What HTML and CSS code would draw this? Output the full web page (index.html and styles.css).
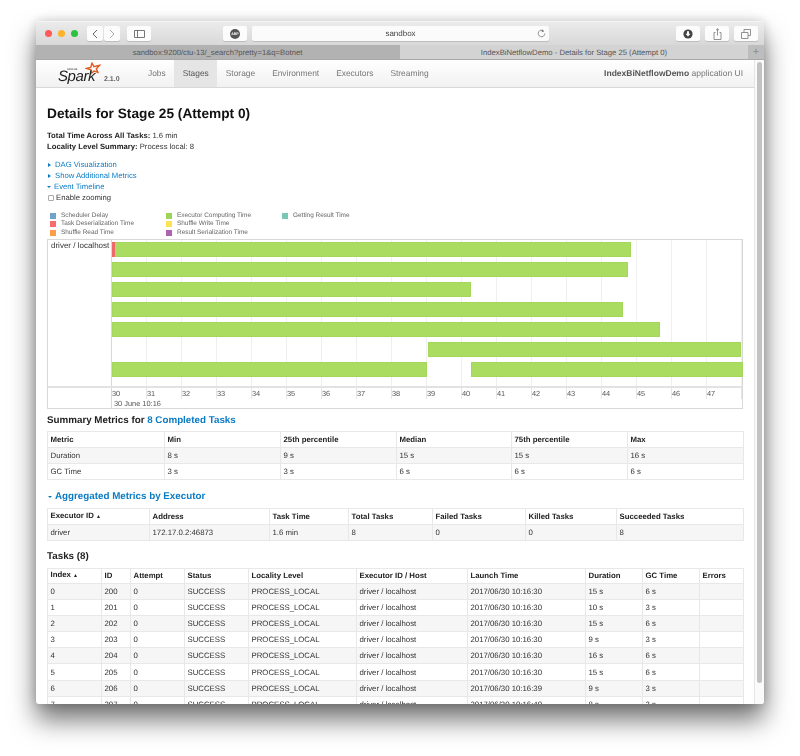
FILE: index.html
```html
<!DOCTYPE html>
<html lang="en-US">
  <head>
    <meta charset="utf-8"/>
    <title>Details for Stage 25 (Attempt 0)</title>
    <link rel="stylesheet" href="styles.css">
  </head>

  <body>
    <div class="window">
      <!-- browser chrome -->
      <div class="toolbar">
        <span class="light red"></span>
        <span class="light yellow"></span>
        <span class="light green"></span>
        <div class="btn-pair">
          <span class="btn back"><svg width="6" height="10" viewBox="0 0 6 10"><path d="M5 1 1 5l4 4" fill="none" stroke="#666" stroke-width="1"/></svg></span>
          <span class="btn forward"><svg width="6" height="10" viewBox="0 0 6 10"><path d="M1 1l4 4-4 4" fill="none" stroke="#aaa" stroke-width="1"/></svg></span>
        </div>
        <span class="btn sidebar"><svg width="11" height="8" viewBox="0 0 11 8"><path d="M.5.5h10v7H.5zM3.5.5v7" fill="none" stroke="#777" stroke-width="1"/></svg></span>
        <span class="btn abp"><span class="abp-sign">ABP</span></span>
        <div class="urlbar">
          <span class="url">sandbox</span>
          <svg class="reload" width="9" height="9" viewBox="0 0 9 9"><path d="M6.9 2.2A3.3 3.3 0 1 0 7.8 4.5" fill="none" stroke="#777" stroke-width=".8"/><path d="M4.8.4 7 2.2 4.8 3.2z" fill="#777"/></svg>
        </div>
        <span class="btn download"><svg width="10" height="10" viewBox="0 0 10 10"><circle cx="5" cy="5" r="4.6" fill="#444"/><path d="M4 2.2h2v2.6h1.5L5 7.6 2.5 4.8H4z" fill="#fff"/></svg></span>
        <span class="btn share"><svg width="9" height="12" viewBox="0 0 9 12"><path d="M2.5 4.5H1v7h7v-7H6.5M4.5 7.5V.8M3 2.2 4.5.8 6 2.2" fill="none" stroke="#777" stroke-width=".8"/></svg></span>
        <span class="btn tabs-btn"><svg width="10" height="10" viewBox="0 0 10 10"><path d="M3 3V.5h6.5v6H7M.5 3.5H7v6H.5z" fill="none" stroke="#777" stroke-width=".8"/></svg></span>
      </div>
      <div class="tabbar">
        <div class="tab tab-off">sandbox:9200/ctu-13/_search?pretty=1&amp;q=Botnet</div>
        <div class="tab tab-on">IndexBiNetflowDemo - Details for Stage 25 (Attempt 0)</div>
        <div class="tab-plus">+</div>
      </div>

      <div class="viewport">
        <div class="page">
          <!-- spark nav -->
          <div class="navbar">
            <div class="brand">
              <svg class="star" width="16" height="14" viewBox="0 0 16 14"><path d="M7 1.2 9 4.6l5.6-1.3-3.3 3.5 1.6 3.6-3.9-1.3-3.2 2.6.4-3.8L1.4 6.4l4.3-.9z" fill="none" stroke="#e25a1c" stroke-width="1.4"/></svg>
              <span class="apache">APACHE</span>
              <span class="spark-word">Spark</span>
              <span class="version">2.1.0</span>
            </div>
            <ul class="nav-links">
              <li>Jobs</li>
              <li class="active">Stages</li>
              <li>Storage</li>
              <li>Environment</li>
              <li>Executors</li>
              <li>Streaming</li>
            </ul>
            <p class="app-name"><strong>IndexBiNetflowDemo</strong> application UI</p>
          </div>

          <div class="content">
            <h3 class="title">Details for Stage 25 (Attempt 0)</h3>
            <ul class="summary-list">
              <li><strong>Total Time Across All Tasks:</strong> 1.6 min</li>
              <li><strong>Locality Level Summary:</strong> Process local: 8</li>
            </ul>

            <div class="toggles">
              <div class="toggle"><span class="arrow-right"></span><a href="#">DAG Visualization</a></div>
              <div class="toggle"><span class="arrow-right"></span><a href="#">Show Additional Metrics</a></div>
              <div class="toggle"><span class="arrow-down"></span><a href="#">Event Timeline</a></div>
              <label class="zoom-check"><input type="checkbox"> Enable zooming</label>
            </div>

            <div class="legend">
              <div class="legend-item"><span class="swatch c-delay"></span>Scheduler Delay</div>
              <div class="legend-item"><span class="swatch c-run"></span>Executor Computing Time</div>
              <div class="legend-item"><span class="swatch c-result"></span>Getting Result Time</div>
              <div class="legend-item"><span class="swatch c-deser"></span>Task Deserialization Time</div>
              <div class="legend-item"><span class="swatch c-write"></span>Shuffle Write Time</div>
              <div class="legend-item"></div>
              <div class="legend-item"><span class="swatch c-read"></span>Shuffle Read Time</div>
              <div class="legend-item"><span class="swatch c-ser"></span>Result Serialization Time</div>
            </div>

            <div class="timeline">
              <div class="timeline-top">
                <div class="group-label">driver / localhost</div>
                <div class="canvas">
                  <div class="bar" style="top:2px;left:0;width:519px"><span class="bar-deser"></span></div>
                  <div class="bar" style="top:22px;left:0;width:516px"></div>
                  <div class="bar" style="top:42px;left:0;width:359px"></div>
                  <div class="bar" style="top:62px;left:0;width:511px"></div>
                  <div class="bar" style="top:82px;left:0;width:548px"></div>
                  <div class="bar" style="top:102px;left:316px;width:313px"></div>
                  <div class="bar" style="top:122px;left:0;width:315px"></div>
                  <div class="bar" style="top:122px;left:359px;width:272px"></div>
                </div>
              </div>
              <div class="timeline-axis">
                <div class="axis-spacer"></div>
                <div class="axis-main">
                  <div class="ticks">
                    <span>30</span><span>31</span><span>32</span><span>33</span><span>34</span><span>35</span>
                    <span>36</span><span>37</span><span>38</span><span>39</span><span>40</span><span>41</span>
                    <span>42</span><span>43</span><span>44</span><span>45</span><span>46</span><span>47</span>
                  </div>
                  <div class="axis-date">30 June 10:16</div>
                </div>
              </div>
            </div>

            <h4 class="section">Summary Metrics for <a href="#">8 Completed Tasks</a></h4>
            <table class="grid t-summary">
              <colgroup><col><col><col><col><col><col></colgroup>
              <tr><th>Metric</th><th>Min</th><th>25th percentile</th><th>Median</th><th>75th percentile</th><th>Max</th></tr>
              <tr><td>Duration</td><td>8 s</td><td>9 s</td><td>15 s</td><td>15 s</td><td>16 s</td></tr>
              <tr><td>GC Time</td><td>3 s</td><td>3 s</td><td>6 s</td><td>6 s</td><td>6 s</td></tr>
            </table>

            <h4 class="section section-agg"><span class="arrow-down"></span><a href="#">Aggregated Metrics by Executor</a></h4>
            <table class="grid t-exec">
              <colgroup><col><col><col><col><col><col><col></colgroup>
              <tr><th>Executor ID <span class="sort">▲</span></th><th>Address</th><th>Task Time</th><th>Total Tasks</th><th>Failed Tasks</th><th>Killed Tasks</th><th>Succeeded Tasks</th></tr>
              <tr><td>driver</td><td>172.17.0.2:46873</td><td>1.6 min</td><td>8</td><td>0</td><td>0</td><td>8</td></tr>
            </table>

            <h4 class="section section-tasks">Tasks (8)</h4>
            <table class="grid t-tasks">
              <colgroup><col><col><col><col><col><col><col><col><col><col></colgroup>
              <tr><th>Index <span class="sort">▲</span></th><th>ID</th><th>Attempt</th><th>Status</th><th>Locality Level</th><th>Executor ID / Host</th><th>Launch Time</th><th>Duration</th><th>GC Time</th><th>Errors</th></tr>
              <tr><td>0</td><td>200</td><td>0</td><td>SUCCESS</td><td>PROCESS_LOCAL</td><td>driver / localhost</td><td>2017/06/30 10:16:30</td><td>15 s</td><td>6 s</td><td></td></tr>
              <tr><td>1</td><td>201</td><td>0</td><td>SUCCESS</td><td>PROCESS_LOCAL</td><td>driver / localhost</td><td>2017/06/30 10:16:30</td><td>10 s</td><td>3 s</td><td></td></tr>
              <tr><td>2</td><td>202</td><td>0</td><td>SUCCESS</td><td>PROCESS_LOCAL</td><td>driver / localhost</td><td>2017/06/30 10:16:30</td><td>15 s</td><td>6 s</td><td></td></tr>
              <tr><td>3</td><td>203</td><td>0</td><td>SUCCESS</td><td>PROCESS_LOCAL</td><td>driver / localhost</td><td>2017/06/30 10:16:30</td><td>9 s</td><td>3 s</td><td></td></tr>
              <tr><td>4</td><td>204</td><td>0</td><td>SUCCESS</td><td>PROCESS_LOCAL</td><td>driver / localhost</td><td>2017/06/30 10:16:30</td><td>16 s</td><td>6 s</td><td></td></tr>
              <tr><td>5</td><td>205</td><td>0</td><td>SUCCESS</td><td>PROCESS_LOCAL</td><td>driver / localhost</td><td>2017/06/30 10:16:30</td><td>15 s</td><td>6 s</td><td></td></tr>
              <tr><td>6</td><td>206</td><td>0</td><td>SUCCESS</td><td>PROCESS_LOCAL</td><td>driver / localhost</td><td>2017/06/30 10:16:39</td><td>9 s</td><td>3 s</td><td></td></tr>
              <tr><td>7</td><td>207</td><td>0</td><td>SUCCESS</td><td>PROCESS_LOCAL</td><td>driver / localhost</td><td>2017/06/30 10:16:40</td><td>8 s</td><td>3 s</td><td></td></tr>
            </table>
          </div>
        </div>
        <div class="scrollbar"><div class="thumb"></div></div>
      </div>
    </div>
  </body>
</html>
```

FILE: styles.css
```css
* {
  box-sizing: border-box;
}

html, body {
  height: 100%;
}

body {
  background-color: #fff;
  color: #333;
  font: 7.7px/11px "Liberation Sans", Arial, sans-serif;
  text-rendering: geometricPrecision;
  margin: 0;
  padding: 21px 36px 0;
  overflow: hidden;
}

a {
  color: #0b7cc4;
  text-decoration: none;
}

/* browser window */
.window {
  height: 683px;
  border-radius: 4px 4px 3px 3px;
  overflow: hidden;
  background: #fff;
  box-shadow: 0 16px 26px rgba(0, 0, 0, .55), 0 0 12px rgba(0, 0, 0, .18);
  filter: blur(.4px);
}

.toolbar {
  height: 24px;
  display: flex;
  align-items: center;
  padding: 0 6px 0 9px;
  background: linear-gradient(#ebebeb, #d8d8d8);
  border-top: 1px solid #f4f4f4;
}

.light {
  width: 7px;
  height: 7px;
  border-radius: 50%;
  margin-right: 6px;
}
.red { background: #fc5b57; }
.yellow { background: #fdb428; }
.green { background: #2cc13f; }

.btn {
  height: 15px;
  display: flex;
  align-items: center;
  justify-content: center;
  background: #fcfcfc;
  border-radius: 2px;
  box-shadow: 0 1px 0 #bdbdbd;
}

.btn-pair {
  display: flex;
  gap: 1px;
  margin-left: 3px;
}
.back, .forward { width: 16px; }
.sidebar { width: 24px; margin-left: 7px; }
.abp { width: 24px; margin-left: 72px; }

.abp-sign {
  width: 10px;
  height: 10px;
  border-radius: 50%;
  background: #555;
  color: #fff;
  font-size: 3.5px;
  font-weight: bold;
  line-height: 10px;
  text-align: center;
}

.urlbar {
  width: 297px;
  height: 15px;
  margin-left: 5px;
  display: flex;
  align-items: center;
  justify-content: center;
  position: relative;
  background: #fbfbfb;
  border-radius: 2px;
  box-shadow: 0 1px 0 #bdbdbd;
}
.url {
  font-size: 8px;
  color: #444;
}
.reload {
  position: absolute;
  right: 3px;
  top: 3px;
}

.download { width: 24px; margin-left: 127px; }
.share { width: 24px; margin-left: 5px; }
.tabs-btn { width: 24px; margin-left: 5px; }

.tabbar {
  height: 15px;
  display: flex;
  font-size: 7.7px;
  line-height: 15px;
  color: #555;
  text-align: center;
  border-bottom: 1px solid #a8a8a8;
}
.tab-off {
  width: 364px;
  background: #b2b2b2;
  padding-right: 1px;
}
.tab-on {
  width: 348px;
  background: #d3d3d3;
}
.tab-plus {
  flex: 1;
  background: #bdbdbd;
  color: #8b8b8b;
  font-size: 11px;
}

.viewport {
  display: flex;
  height: 644px;
  overflow: hidden;
}

.page {
  flex: 1;
  min-width: 0;
}

.scrollbar {
  width: 10px;
  background: #fafafa;
  border-left: 1px solid #e6e6e6;
  padding: 2px 2px 0 2px;
}
.thumb {
  height: 621px;
  border-radius: 3px;
  background: #c2c2c2;
}

/* spark nav */
.navbar {
  height: 28px;
  display: flex;
  align-items: stretch;
  padding-right: 11px;
  background: linear-gradient(#fff, #f1f1f1);
  border-bottom: 1px solid #d8d8d8;
}

.brand {
  width: 103.5px;
  position: relative;
}
.star {
  position: absolute;
  left: 49px;
  top: 2px;
}
.apache {
  position: absolute;
  left: 31px;
  top: 8px;
  font-size: 2.5px;
  line-height: 3px;
  font-weight: bold;
  color: #555;
}
.spark-word {
  position: absolute;
  left: 22px;
  top: 9px;
  font-size: 15px;
  line-height: 15px;
  font-style: italic;
  letter-spacing: -.4px;
  color: #222;
}
.version {
  position: absolute;
  left: 68px;
  top: 14px;
  font-size: 7px;
  font-weight: bold;
  color: #666;
}

.nav-links {
  list-style: none;
  display: flex;
  margin: 0;
  padding: 0;
  font-size: 8.4px;
  line-height: 27px;
  color: #777;
}
.nav-links li {
  padding: 0 8.5px;
}
.nav-links .active {
  background: #e5e5e5;
  color: #555;
}

.app-name {
  margin: 0 0 0 auto;
  font-size: 8.5px;
  line-height: 27px;
  color: #777;
}
.app-name strong {
  color: #555;
}

/* page body */
.content {
  padding: 0 11px;
}

.title {
  margin: 17px 0 0;
  font-size: 13.7px;
  line-height: 17px;
  font-weight: bold;
  color: #111;
}

.summary-list {
  list-style: none;
  margin: 8px 0 0;
  padding: 0;
  line-height: 11px;
}
.summary-list strong {
  color: #222;
}

.toggles {
  margin-top: 7px;
}
.toggle, .zoom-check {
  display: flex;
  align-items: center;
  height: 11px;
}
.zoom-check input {
  appearance: none;
  width: 6px;
  height: 6px;
  margin: 1px 2px 0 1px;
  border: 1px solid #aaa;
  border-radius: 1px;
  background: #fff;
}

.arrow-right {
  width: 0;
  height: 0;
  margin: 0 4px 0 1px;
  border-left: 3px solid #0b7cc4;
  border-top: 2px solid transparent;
  border-bottom: 2px solid transparent;
}
.arrow-down {
  width: 0;
  height: 0;
  margin-right: 3px;
  border-top: 2px solid #0b7cc4;
  border-left: 2.5px solid transparent;
  border-right: 2.5px solid transparent;
}

.legend {
  display: grid;
  grid-template-columns: 116px 116px 116px;
  margin: 8.5px 0 0 3px;
  font-size: 6.45px;
  line-height: 8.5px;
  color: #666;
}
.legend-item {
  display: flex;
  align-items: center;
  height: 8.5px;
}
.swatch {
  width: 6px;
  height: 6px;
  margin-right: 5px;
}
.c-delay { background: #6fa3cb; }
.c-deser { background: #f76c6c; }
.c-read { background: #fb9f4a; }
.c-run { background: #9fd45a; }
.c-write { background: #fde354; }
.c-ser { background: #ae63ae; }
.c-result { background: #78c8b6; }

/* timeline */
.timeline {
  height: 170px;
  margin-top: 1.5px;
  border: 1px solid #d8d8d8;
  display: flex;
  flex-direction: column;
}
.timeline-top {
  height: 148px;
  display: flex;
  border-bottom: 2px solid #e2e2e2;
}
.group-label {
  width: 64px;
  padding: 0 0 0 3px;
  font-size: 8px;
  line-height: 11px;
  border-right: 1px solid #d8d8d8;
}
.canvas {
  flex: 1;
  position: relative;
  background: repeating-linear-gradient(90deg, #fff 0, #fff 34px, #efefef 34px, #efefef 35px);
}
.bar {
  position: absolute;
  height: 15px;
  background: #abdc62;
  border: 1px solid #a4d65a;
}
.bar-deser {
  display: block;
  width: 3px;
  height: 15px;
  margin: -1px 0 0 -1px;
  background: #f0696a;
}
.timeline-axis {
  flex: 1;
  display: flex;
}
.axis-spacer {
  width: 64px;
}
.axis-main {
  flex: 1;
  border-left: 1px solid #d8d8d8;
}
.ticks {
  display: flex;
  height: 11px;
  font-size: 7.4px;
  line-height: 11px;
  color: #555;
}
.ticks span {
  flex: 0 0 35px;
  border-right: 1px solid #e6e6e6;
}
.axis-date {
  padding-left: 2px;
  font-size: 7.4px;
  line-height: 9px;
  color: #555;
}

/* tables */
.section {
  margin: 6px 0 4px;
  font-size: 9.8px;
  line-height: 12px;
  font-weight: bold;
  color: #222;
}
.section-agg {
  margin: 11px 0 5px;
  display: flex;
  align-items: center;
}
.section-agg .arrow-down {
  margin: 0 3px 0 1px;
}
.section-tasks {
  margin: 10px 0 5px;
}

.grid {
  width: 696px;
  table-layout: fixed;
  border-collapse: collapse;
  border: 1px solid #e8e8e8;
  font-size: 7.8px;
}
.grid th, .grid td {
  height: 16px;
  padding: 0 2.5px;
  border: 1px solid #e8e8e8;
  text-align: left;
  white-space: nowrap;
  overflow: hidden;
}
.t-tasks th {
  height: 15px;
}
.t-tasks td {
  height: 16.2px;
}
.grid th {
  color: #222;
  font-weight: bold;
}
.grid tr:nth-child(even) td {
  background: #f6f6f6;
}
.sort {
  font-size: 5px;
}

.t-summary col:nth-child(1) { width: 117px; }
.t-summary col:nth-child(2) { width: 116px; }
.t-summary col:nth-child(3) { width: 116px; }
.t-summary col:nth-child(4) { width: 115px; }
.t-summary col:nth-child(5) { width: 116px; }
.t-summary col:nth-child(6) { width: 116px; }

.t-exec col:nth-child(1) { width: 102px; }
.t-exec col:nth-child(2) { width: 120px; }
.t-exec col:nth-child(3) { width: 79px; }
.t-exec col:nth-child(4) { width: 84px; }
.t-exec col:nth-child(5) { width: 93px; }
.t-exec col:nth-child(6) { width: 91px; }
.t-exec col:nth-child(7) { width: 127px; }

.t-tasks col:nth-child(1) { width: 54px; }
.t-tasks col:nth-child(2) { width: 29px; }
.t-tasks col:nth-child(3) { width: 54px; }
.t-tasks col:nth-child(4) { width: 64px; }
.t-tasks col:nth-child(5) { width: 108px; }
.t-tasks col:nth-child(6) { width: 111px; }
.t-tasks col:nth-child(7) { width: 118px; }
.t-tasks col:nth-child(8) { width: 57px; }
.t-tasks col:nth-child(9) { width: 57px; }
.t-tasks col:nth-child(10) { width: 44px; }
```
